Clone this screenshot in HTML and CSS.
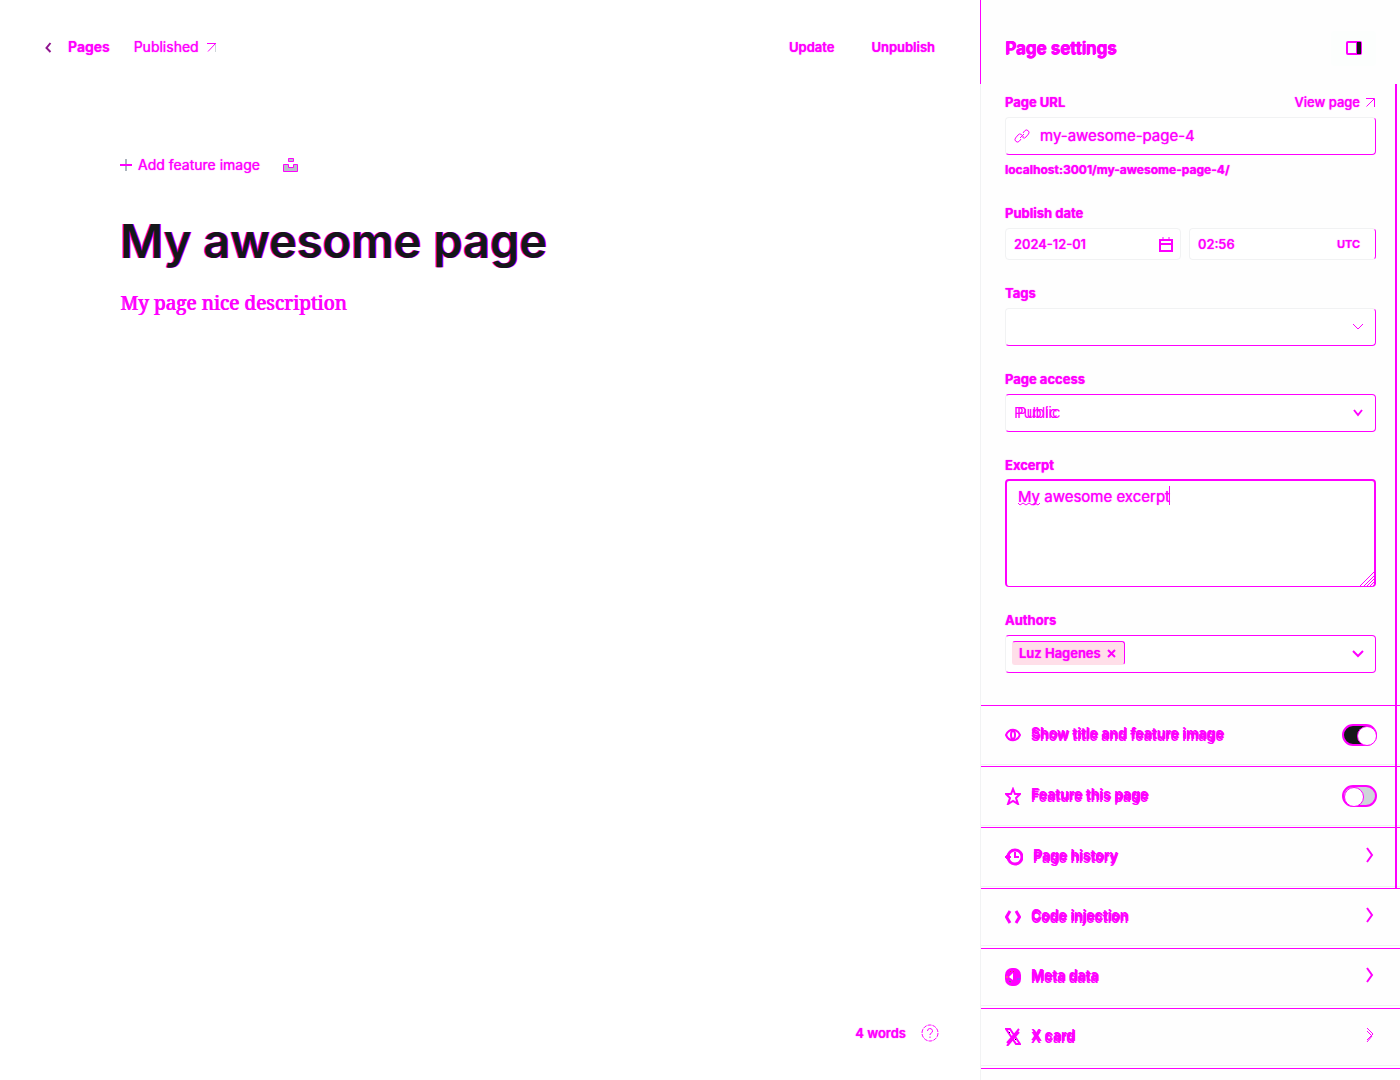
FILE: index.html
```html
<!DOCTYPE html>
<html lang="en">
<head>
<meta charset="utf-8">
<title>My awesome page</title>
<link rel="stylesheet" href="styles.css">
</head>
<body>
<div class="app">
  <main class="editor">
    <header class="topbar">
      <nav class="crumbs">
        <a class="back" href="#"><svg width="8" height="12" viewBox="0 0 8 12"><path d="M6.500 2L2.500 7l4 4" stroke="#90158f" stroke-width="2"/></svg>Pages</a>
        <a class="status" href="#">Published<svg width="11" height="11" viewBox="0 0 11 11"><path d="M1 1.500h9M9 2L2 9.500"/><path d="M9.500 2v8" stroke="#ced4d9"/></svg></a>
      </nav>
      <div class="actions"><button type="button">Update</button><button type="button">Unpublish</button></div>
    </header>
    <article class="canvas">
      <div class="feature">
        <button type="button" class="add"><svg width="12" height="14" viewBox="0 0 12 14"><path d="M6 1v12" stroke="#abb4be" stroke-width="2"/><path d="M0 7h12" stroke-width="2"/></svg>Add feature image</button>
        <button type="button" aria-label="Unsplash"><svg width="16" height="16" viewBox="0 0 16 16"><path d="M5.500 1.500h5v3h-5zM.5 7.500h5v3h5v-3h4v7H.5z" fill="#b9c2c9"/></svg></button>
      </div>
      <h1>My awesome page</h1>
      <p class="description">My page nice description</p>
    </article>
    <footer class="foot"><span>4 words</span><button type="button" aria-label="Help"><svg width="18" height="18" viewBox="0 0 18 18"><circle cx="9" cy="9" r="8" stroke-dasharray="4 1"/><path d="M6.500 7a2.500 2.500 0 1 1 3.500 2.300c-.8.400-1 .7-1 1.700M9 12.500v1.500"/></svg></button></footer>
  </main>

  <aside class="settings">
    <header class="settings-head">
      <h2>Page settings</h2>
      <button type="button" class="collapse" aria-label="Toggle settings"><svg width="16" height="14" viewBox="0 0 16 14"><rect x="1" y="1" width="14" height="12" rx="1" stroke-width="2"/><path d="M10.500 1v12"/><path d="M11 1h4v12h-4z" fill="#15171a" stroke="none"/></svg></button>
    </header>
    <div class="settings-scroll">
      <form class="fields">
        <div class="field">
          <div class="label-row"><label for="url">Page URL</label><a href="#">View page<svg width="11" height="11" viewBox="0 0 11 11"><path d="M1 1.500h8.500V10"/><path d="M9 2L1.500 9.500"/></svg></a></div>
          <div class="box"><svg width="16" height="16" viewBox="0 0 16 16"><path d="M9 5l1.500-2a2.500 2.500 0 0 1 4 3L12 9a2.500 2.500 0 0 1-3.500.5M7 11l-1.500 2a2.500 2.500 0 0 1-4-3L4 7a2.500 2.500 0 0 1 3.500-.5L9.500 9M10 6L6 10"/></svg><input id="url" type="text" value="my-awesome-page-4"></div>
          <p class="hint">localhost:3001/my-awesome-page-4/</p>
        </div>
        <div class="field">
          <label for="date">Publish date</label>
          <div class="pair">
            <div class="box small date"><input id="date" type="text" value="2024-12-01"><svg width="14" height="15" viewBox="0 0 14 15"><path d="M1 3h12v11H1zM1 7h12" stroke-width="2"/><path d="M4 0v4M10 0v4"/></svg></div>
            <div class="box small time"><input type="text" aria-label="Publish time" value="02:56"><span>UTC</span></div>
          </div>
        </div>
        <div class="field">
          <label for="tags">Tags</label>
          <div class="box"><input id="tags" type="text"><svg class="arrow" width="12" height="8" viewBox="0 0 12 8"><path d="M1 1l5 5 5-5"/></svg></div>
        </div>
        <div class="field">
          <label for="access">Page access</label>
          <div class="box outlined select"><select id="access"><option>Public</option></select><svg class="arrow" width="12" height="8" viewBox="0 0 12 8"><path d="M2 1l4 5 4-5" stroke-width="2"/></svg></div>
        </div>
        <div class="field tight">
          <label for="excerpt">Excerpt</label>
          <div class="excerpt">
            <textarea id="excerpt" spellcheck="false">My awesome excerpt</textarea>
            <svg class="squiggle" width="22" height="4" viewBox="0 0 22 4"><path d="M0 1l2 2 3-2 3 2 3-2 3 2 3-2 3 2 2-2"/></svg>
            <i class="caret"></i>
            <svg class="grip" width="17" height="16" viewBox="0 0 17 16"><path d="M1 16L17 0M5 16L17 4M8 16l9-9M11 16l6-6M14 16l3-3"/></svg>
          </div>
        </div>
        <div class="field">
          <label for="authors">Authors</label>
          <div class="box outlined authors"><span class="chip">Luz Hagenes<button type="button" aria-label="Remove"><svg width="9" height="9" viewBox="0 0 9 9"><path d="M1 1l7 7M8 1L1 8" stroke-width="2"/></svg></button></span><input id="authors" type="text"><svg class="arrow" width="12" height="8" viewBox="0 0 12 8"><path d="M1 1l5 5 5-5" stroke-width="2"/></svg></div>
        </div>
      </form>
      <div class="rows">
        <label class="row tall"><svg width="16" height="16" viewBox="0 0 16 16"><path d="M1 8c3-7 11-7 14 0-3 7-11 7-14 0z" stroke-width="2"/><ellipse cx="8" cy="8" rx="2" ry="4" stroke-width="2"/></svg><span>Show title and feature image</span><input type="checkbox" class="toggle" checked></label>
        <label class="row tall"><svg width="16" height="18" viewBox="0 0 16 18"><path d="M8 2l2 5h5l-4 4 2 6-5-3-5 3 2-6-4-4h5z" stroke-width="2"/></svg><span>Feature this page</span><input type="checkbox" class="toggle"></label>
        <button type="button" class="row tall"><svg width="18" height="18" viewBox="0 0 18 18"><circle cx="10" cy="9" r="7" stroke-width="3"/><path d="M10 4v5h4" stroke-width="2"/><path d="M0 9l3-3 3 3-3 3z" fill="#f0f"/></svg><span>Page history</span><svg class="go" width="8" height="16" viewBox="0 0 8 16"><path d="M1 1l5 7-5 7" stroke-width="2"/></svg></button>
        <button type="button" class="row"><svg width="16" height="14" viewBox="0 0 16 14"><path d="M5 1L1.500 7 5 13M11 1l3.500 6L11 13" stroke-width="3"/></svg><span>Code injection</span><svg class="go" width="8" height="16" viewBox="0 0 8 16"><path d="M1 1l5 7-5 7" stroke-width="2"/></svg></button>
        <button type="button" class="row"><svg width="16" height="18" viewBox="0 0 16 18"><rect width="16" height="18" rx="7" fill="#f0f" stroke="none"/><path d="M8 5v7L4 9z" fill="#fff" stroke="none"/><path d="M5 3.500h6" stroke="#ea4335" stroke-dasharray="1 2"/><path d="M1 9h2" stroke="#fbbc05"/><path d="M12 11h3" stroke="#4285f4"/><path d="M4 13l2 1" stroke="#34a853"/></svg><span>Meta data</span><svg class="go" width="8" height="16" viewBox="0 0 8 16"><path d="M1 1l5 7-5 7" stroke-width="2"/></svg></button>
        <button type="button" class="row"><svg width="16" height="18" viewBox="0 0 16 18"><path d="M1 1h4l10 15h-4zM14 1L2 15M14 4L2 18" stroke-width="2"/><path d="M4 4l1 1M10 11l1 1" stroke="#15171a"/></svg><span>X card</span><svg class="go" width="8" height="16" viewBox="0 0 8 16"><path d="M1 1l6 6-6 6M1 4l5 5-5 6"/></svg></button>
        <div class="row"></div>
      </div>
    </div>
    <i class="scrollbar"></i>
  </aside>
</div>
</body>
</html>
```
FILE: styles.css
```css
:root { --hot: #f0f; --ink: #15171a; --pale: #f1f2f3; }
* { box-sizing: border-box; }
body { margin: 0; background: #fff; color: var(--hot); font: 400 14px/20px Inter, sans-serif; text-shadow: 0 0 1px var(--hot); }
a { color: inherit; text-decoration: none; }
button { border: 0; padding: 0; background: none; color: inherit; font: inherit; text-shadow: inherit; }
svg { display: block; flex: none; fill: none; stroke: var(--hot); }
h1, h2, p { margin: 0; }
.app { display: flex; height: 100vh; overflow: hidden; }
.editor { flex: 1; display: flex; flex-direction: column; }
.topbar { display: flex; justify-content: space-between; padding: 37px 45px 0 44px; height: 84px; }
.crumbs, .actions { display: flex; gap: 24px; height: 20px; }
.actions { gap: 37px; font-size: 13px; font-weight: 600; }
.crumbs a, .add { display: flex; align-items: center; }
.back { gap: 16px; font-weight: 600; }
.status { gap: 7px; }
.canvas { flex: 1; padding: 71px 120px 0; }
.feature { display: flex; align-items: center; gap: 23px; height: 20px; }
.add { gap: 6px; }
h1 { margin-top: 37px; color: var(--ink); font-size: 47px; line-height: 58px; font-weight: 600; text-shadow: -1px 0 var(--hot), 1px 0 var(--hot); }
.description { margin-top: 19px; font: 400 19px/28px "Noto Serif", "Liberation Serif", serif; text-shadow: 1px 0 var(--hot); }
.foot { display: flex; justify-content: flex-end; align-items: center; gap: 15px; padding: 0 41px 37px; font-size: 13px; font-weight: 600; }

.settings { position: relative; width: 420px; display: flex; flex-direction: column; background: #fefefe; }
.settings-head { display: flex; flex: none; align-items: center; justify-content: space-between; height: 84px; padding: 12px 24px 0; border-left: 1px solid var(--hot); }
h2 { font-size: 17px; line-height: 24px; font-weight: 600; text-shadow: 0 1px var(--hot), 1px 0 var(--hot); }
.collapse { display: flex; align-items: center; justify-content: center; width: 45px; height: 35px; border-radius: 3px; background: #fcfefd; }
.settings-scroll { flex: 1; overflow: hidden; border-left: 1px solid var(--pale); }
.scrollbar { position: absolute; right: 3px; top: 84px; width: 2px; height: 805px; background: var(--hot); }
.fields { display: flex; flex-direction: column; gap: 24px; padding: 9px 24px 32px; }
.field { display: flex; flex-direction: column; gap: 5px; }
.field.tight { gap: 4px; }
.field label { font-size: 13px; line-height: 19px; font-weight: 700; }
.label-row { display: flex; justify-content: space-between; font-size: 13px; line-height: 19px; font-weight: 500; }
.label-row a { display: flex; align-items: center; gap: 5px; }
.hint { font-size: 12px; line-height: 20px; font-weight: 700; }
.box { display: flex; align-items: center; height: 38px; padding: 0 12px 0 8px; gap: 10px; border: 1px solid; border-color: var(--pale) var(--hot) var(--hot) var(--pale); border-radius: 4px; background: #fff; }
.box.outlined { border-top-color: var(--hot); }
.box input, .box select { flex: 1; width: 100%; min-width: 0; border: 0; padding: 0; outline: 0; appearance: none; background: none; color: inherit; font: 400 15px/20px Inter, sans-serif; text-shadow: inherit; }
.box select { text-shadow: 3px 0 var(--hot); }
.pair { display: grid; grid-template-columns: 176fr 187fr; gap: 8px; }
.box.small { height: 32px; padding: 0 7px 0 8px; border-color: var(--pale); }
.box.small input { font-size: 13px; font-weight: 500; }
.box.time { padding-right: 15px; border-right-color: var(--hot); font-size: 11px; font-weight: 600; }
.arrow { margin-right: -1px; }
.excerpt { position: relative; height: 108px; }
.excerpt textarea { display: block; width: 100%; height: 108px; padding: 6px 11px; resize: none; border: 1px solid var(--hot); border-width: 2px 2px 1px; border-radius: 4px; outline: 0; background: #fff; color: inherit; font: 400 15px/20px Inter, sans-serif; text-shadow: inherit; }
.squiggle, .caret, .grip { position: absolute; }
.squiggle { left: 13px; top: 23px; }
.caret { left: 164px; top: 7px; width: 1px; height: 19px; background: var(--hot); }
.grip { right: 0; bottom: 1px; }
.box.authors { padding-left: 6px; }
.chip { display: flex; align-items: center; gap: 6px; height: 24px; margin-bottom: 2px; padding: 0 8px 0 6px; border: 1px solid; border-color: var(--hot) var(--hot) #ffdfe9 #ffdfe9; border-radius: 3px; background: #ffdfe9; font-size: 13px; font-weight: 600; }
.row { display: flex; align-items: center; width: 100%; height: 58px; margin-bottom: 2px; padding: 0 24px; gap: 10px; border-top: 1px solid var(--hot); border-bottom: 1px solid var(--pale); text-align: left; font-weight: 600; text-shadow: 0 3px var(--hot), 1px 1px var(--hot); }
.row.tall { height: 60px; margin-bottom: 1px; }
.row span { flex: 1; padding-bottom: 4px; }
.go { margin: 0 2px 4px 0; }
.toggle { position: relative; appearance: none; width: 35px; height: 22px; margin: 0 -1px 0 0; border: 2px solid var(--hot); border-radius: 11px; background: #ced4d9; }
.toggle::after { content: ""; position: absolute; left: 0; top: 0; width: 18px; height: 18px; border: 1px solid var(--hot); border-radius: 50%; background: #fff; }
.toggle:checked { background: var(--ink); }
.toggle:checked::after { left: 13px; }
```
